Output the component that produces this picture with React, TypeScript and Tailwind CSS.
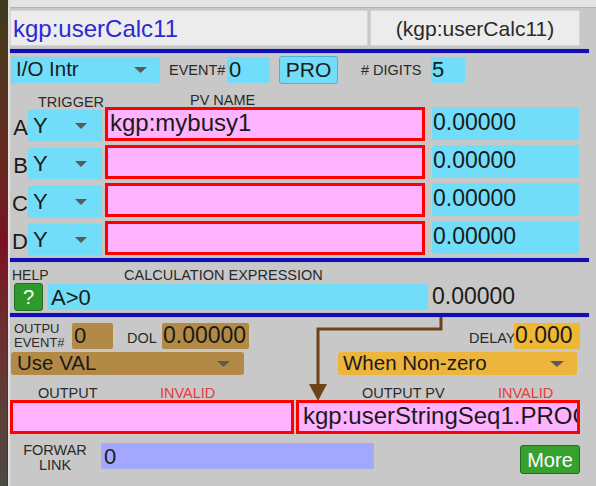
import React from "react";

const Tri = ({ w = 12, h = 6 }: { w?: number; h?: number }) => (
  <svg width={w} height={h} viewBox={`0 0 ${w} ${h}`} className="shrink-0">
    <polygon points={`0,0 ${w},0 ${w / 2},${h}`} fill="#5a5a5a" />
  </svg>
);

const Blue = ({ mt }: { mt: string }) => (
  <div className={`${mt} h-[4px] w-[579px] bg-[#1010b4] shadow-[0_0_1px_#5050d0]`} />
);

function Row({ letter, value }: { letter: string; value: string }) {
  return (
    <div className="flex h-[34px] items-end">
      <div className="w-[18px] pb-[2px] text-right text-[22px] leading-[22px] text-[#1a1a1a]">{letter}</div>
      <div className="flex h-[31px] w-[74px] items-center justify-between rounded-[3px] bg-[#72ddf9] pl-[5px] pr-[15px] text-[22px] text-[#1a1a1a] shadow-[0_0_1px_#9ab]">
        <span>Y</span>
        <Tri w={12} h={6} />
      </div>
      <div className="ml-[3px] flex h-[34px] w-[320px] items-center overflow-hidden whitespace-nowrap border-[3px] border-[#ff0000] bg-[#ffb2ff] pb-[3px] pl-[2px] text-[24px] text-[#1a1a1a]">
        {value}
      </div>
      <div className="ml-[7px] flex h-[33px] w-[147px] items-center self-start rounded-[2px] bg-[#72ddf9] pb-[3px] pl-[1px] text-[23px] text-[#1a1a1a]">
        0.00000
      </div>
    </div>
  );
}

export default function App() {
  return (
    <div className="relative flex h-[486px] w-[596px] overflow-hidden font-['Liberation_Sans',Arial,sans-serif] text-[#2a2a2a]">
      <div className="h-full w-[7px] bg-linear-to-b from-[#3d3c1c] via-[#7a0f22] to-[#4a4a42]" />
      <div className="h-full w-[1px] bg-[#3a3a3a]" />
      <div className="flex flex-1 flex-col border-l-2 border-[#e0e0e0] bg-[#c8c8c8]">
        {/* top strip */}
        <div className="h-[8px] w-full border-b border-[#b4b4b4] bg-[#e4e4e4]" />
        {/* title row */}
        <div className="mt-[2px] flex h-[36px]">
          <div className="w-[358px] rounded-[2px] border border-[#d4d4d4] bg-[#ececec] pl-[2px] pt-[2px] text-[24px] leading-[32px] text-[#2a2ad0]">
            kgp:userCalc11
          </div>
          <div className="ml-[2px] w-[210px] rounded-[2px] border border-[#d4d4d4] bg-[#ececec] pt-[2px] text-center text-[21px] leading-[32px] text-[#2a2a2a]">
            (kgp:userCalc11)
          </div>
        </div>
        <Blue mt="mt-[3px]" />
        {/* row 1 */}
        <div className="mt-[3px] flex h-[27px] items-center">
          <div className="ml-[1px] flex h-[26px] w-[149px] items-center justify-between rounded-[3px] bg-[#72ddf9] pl-[5px] pr-[13px] text-[20.5px] text-[#1a1a1a] shadow-[0_0_1px_#9ab]">
            <span>I/O Intr</span>
            <Tri w={13} h={6} />
          </div>
          <div className="ml-[9px] w-[58px] text-[14.5px] leading-[14px]">EVENT#</div>
          <div className="flex h-[26px] w-[43px] items-center rounded-[2px] bg-[#72ddf9] pl-[2px] text-[22px] text-[#1a1a1a]">0</div>
          <div className="ml-[9px] flex h-[28px] w-[59px] items-center justify-center rounded-[3px] border border-[#4fb0d0] bg-[#72ddf9] text-[21px] text-[#1a1a1a]">
            PRO
          </div>
          <div className="ml-[23px] w-[70px] text-[14.5px] leading-[14px]"># DIGITS</div>
          <div className="flex h-[26px] w-[34px] items-center rounded-[2px] bg-[#72ddf9] pl-[1px] text-[22px] text-[#1a1a1a]">5</div>
        </div>
        {/* labels */}
        <div className="mt-[10px] flex h-[14px] text-[14.5px] leading-[14px]">
          <div className="ml-[28px] w-[152px] translate-y-[2px]">TRIGGER</div>
          <div>PV NAME</div>
        </div>
        {/* A-D rows */}
        <div className="flex flex-col gap-[4px]">
          <Row letter="A" value="kgp:mybusy1" />
          <Row letter="B" value="" />
          <Row letter="C" value="" />
          <Row letter="D" value="" />
        </div>
        <Blue mt="mt-[3px]" />
        {/* help labels */}
        <div className="flex h-[21px] items-end pb-[1px] text-[14.5px] leading-[14px]">
          <div className="ml-[2px] w-[112px] text-[14px]">HELP</div>
          <div>CALCULATION EXPRESSION</div>
        </div>
        {/* help row */}
        <div className="flex h-[28px] items-center">
          <div className="ml-[4px] flex h-[28px] w-[29px] items-center justify-center rounded-[3px] border border-[#1d6e1d] bg-[#2f9a2c] text-[20px] text-white">
            ?
          </div>
          <div className="ml-[5px] flex h-[26px] w-[380px] items-center rounded-[2px] bg-[#72ddf9] pl-[3px] text-[22px] text-[#1a1a1a]">
            A&gt;0
          </div>
          <div className="ml-[4px] pb-[2px] text-[23px] text-[#1a1a1a]">0.00000</div>
        </div>
        <Blue mt="mt-[2px]" />
        {/* output event row */}
        <div className="mt-[5px] flex h-[27px] items-center">
          <div className="ml-[4px] flex w-[58px] flex-col text-[13px] leading-[14px]">
            <span>OUTPU</span>
            <span>EVENT#</span>
          </div>
          <div className="flex h-[26px] w-[41px] items-center rounded-[2px] bg-[#b28a46] pl-[2px] text-[22px] text-[#1a1a1a]">0</div>
          <div className="ml-[14px] w-[35px] translate-y-[2px] text-[14.5px] leading-[14px]">DOL</div>
          <div className="flex h-[26px] w-[87px] items-center rounded-[2px] bg-[#b28a46] pl-[1px] text-[23px] text-[#1a1a1a]">0.00000</div>
          <div className="ml-[220px] w-[45px] translate-y-[2px] whitespace-nowrap text-[14.5px] leading-[14px]">DELAY</div>
          <div className="relative z-10 flex h-[26px] w-[66px] items-center rounded-[2px] bg-[#f0b733] pl-[1px] text-[23px] text-[#1a1a1a]">0.000</div>
        </div>
        {/* menus row */}
        <div className="mt-[3px] flex h-[23px]">
          <div className="ml-[1px] flex h-[23px] w-[233px] items-center justify-between rounded-[3px] bg-[#b28a46] pl-[6px] pr-[14px] text-[20.5px] text-[#1a1a1a]">
            <span>Use VAL</span>
            <Tri w={13} h={6} />
          </div>
          <div className="ml-[94px] flex h-[23px] w-[239px] items-center justify-between rounded-[3px] bg-[#edb53b] pl-[5px] pr-[13px] text-[20.5px] text-[#1a1a1a]">
            <span>When Non-zero</span>
            <Tri w={14} h={6} />
          </div>
        </div>
        {/* output labels */}
        <div className="flex h-[25px] items-end text-[14.5px] leading-[14px]">
          <div className="ml-[28px] w-[122px]">OUTPUT</div>
          <div className="w-[202px] text-[#e63a3a]">INVALID</div>
          <div className="w-[136px]">OUTPUT PV</div>
          <div className="text-[#e63a3a]">INVALID</div>
        </div>
        {/* output row */}
        <div className="flex h-[34px]">
          <div className="h-[34px] w-[284px] border-[3px] border-[#ff0000] bg-[#ffb2ff]" />
          <div className="ml-[2px] flex h-[34px] w-[284px] items-center overflow-hidden whitespace-nowrap border-[3px] border-[#ff0000] bg-[#ffb2ff] pb-[3px] pl-[4px] text-[24px] text-[#1a1a1a]">
            kgp:userStringSeq1.PROC
          </div>
        </div>
        {/* forward row */}
        <div className="mt-[9px] flex items-start">
          <div className="ml-[10px] w-[70px] text-center text-[14.5px] leading-[15px]">
            <div>FORWAR</div>
            <div>LINK</div>
          </div>
          <div className="ml-[11px] flex h-[26px] w-[273px] items-center rounded-[2px] bg-[#a3a8fe] pl-[3px] text-[22px] text-[#1a1a1a]">0</div>
          <div className="ml-[146px] mt-[2px] flex h-[29px] w-[60px] items-center justify-center rounded-[3px] border border-[#1d6e1d] bg-[#37a12f] text-[20px] text-white">
            More
          </div>
        </div>
      </div>
      <svg className="pointer-events-none absolute left-0 top-0" width="596" height="486">
        <polyline points="441,317 441,329 318,329 318,388" fill="none" stroke="#6b4516" strokeWidth="3" />
        <polygon points="309,384 327,384 318,401" fill="#6b4516" />
      </svg>
    </div>
  );
}
